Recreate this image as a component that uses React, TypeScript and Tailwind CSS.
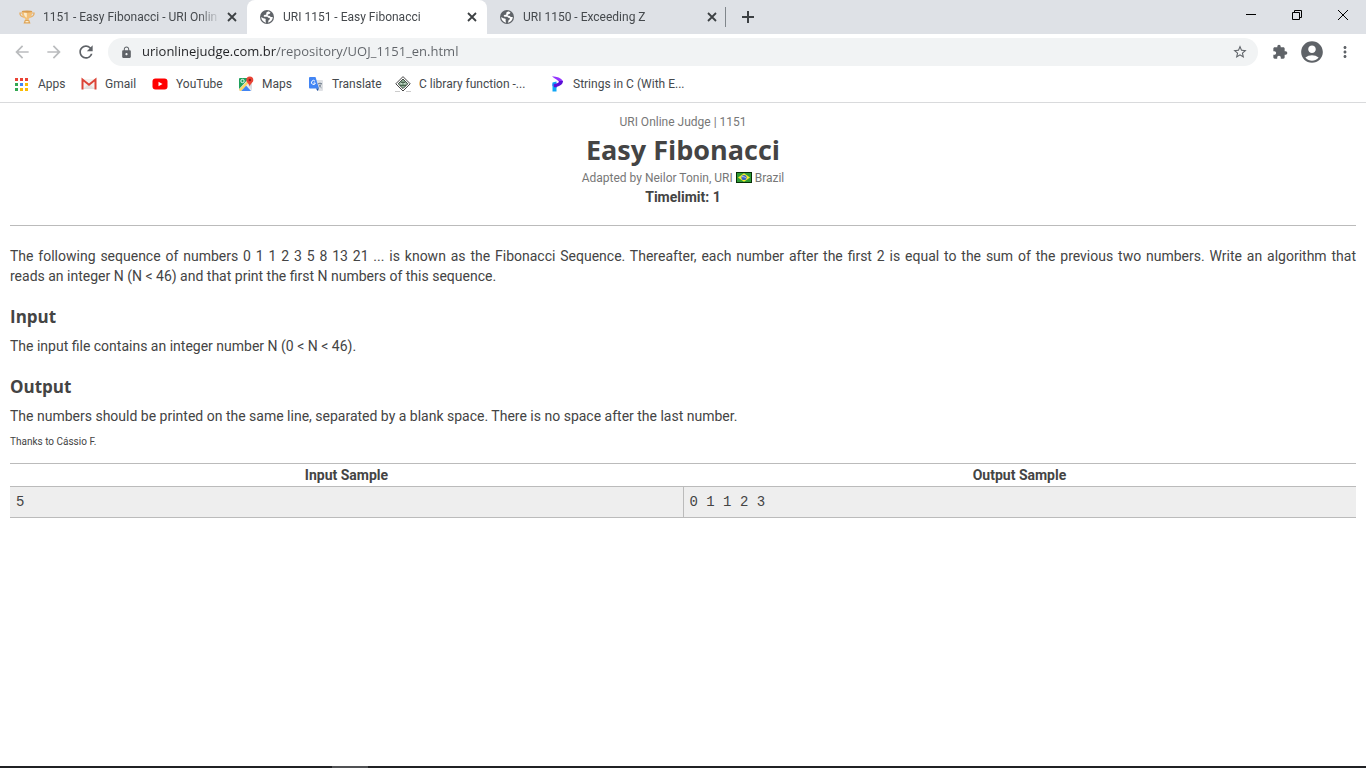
import type { ReactNode } from "react";
import {
  MdAccountCircle,
  MdArrowBack,
  MdArrowForward,
  MdExtension,
  MdLock,
  MdMoreVert,
  MdRefresh,
  MdStarBorder,
} from "react-icons/md";

function TrophyIcon() {
  return (
    <svg width="16" height="16" viewBox="0 0 16 16" aria-hidden="true">
      <path d="M4 4H.9c-.2 2.300 1.600 4 4.600 4.200M12 4h3.100c.2 2.300-1.600 4-4.600 4.200" fill="none" stroke="#e5ac62" strokeWidth="1.200" />
      <path d="M2.800 2.500h10.400c0 3.800-1 5.800-3.400 7.300v1.700H6.200V9.800C3.800 8.300 2.800 6.300 2.800 2.500z" fill="#f2bf78" />
      <path d="M4.800 3.500h3v5.300C5.800 8 4.800 6 4.800 3.500z" fill="#fdeccb" />
      <ellipse cx="8" cy="2.600" rx="5.200" ry="1.100" fill="#d99c4e" />
      <path d="M5.800 11h4.400l1.300 3.500h-7z" fill="#dfa557" />
      <path d="M6.500 12h3v1.300h-3z" fill="#fdeccb" />
    </svg>
  );
}

function GlobeIcon() {
  return (
    <svg width="16" height="16" viewBox="0 0 16 16" aria-hidden="true">
      <circle cx="8" cy="8" r="7" fill="#5f6368" />
      <path
        d="M9 2.200c-.2.900-1.300.8-1.700 1.500-.3.700.5 1.200-.2 1.900-.6.600-1.700.1-2.300.8-.4.600.1 1.300.9 1.300h2.200c.8 0 1 .7 1.500 1.100.6.400 1.500.2 1.500 1 0 .9-1 1-1.400 1.700-.4.700.1 1.500-.8 2.300A5.800 5.800 0 0013.800 8h-1.500c-.8 0-.9-.9-1.600-1.100-.8-.2-1.500.2-1.900-.4-.4-.7.500-1.200 1.300-1.400.7-.2 1.300-.6 1.300-1.500A5.700 5.700 0 009 2.200zM2.200 8.300c.1 2.800 2.200 5 4.700 5.400.3-.9-.4-1.300-.3-2 .1-.8.400-1.300-.2-1.900-.5-.5-1.200-.2-1.900-.5-.7-.3-1.500-1-2.300-1z"
        fill="#fff"
      />
    </svg>
  );
}

function CloseIcon() {
  return (
    <svg width="10" height="10" viewBox="0 0 10 10" aria-hidden="true">
      <path d="M1 1l8 8M9 1L1 9" stroke="#3c4043" strokeWidth="1.800" />
    </svg>
  );
}

function AppsIcon() {
  const colors = ["#ea4335", "#ea4335", "#ea4335", "#34a853", "#4285f4", "#fbbc04", "#34a853", "#fbbc04", "#fbbc04"];
  return (
    <svg width="14" height="13" viewBox="0 0 14 13" aria-hidden="true">
      {colors.map((c, i) => (
        <rect key={i} x={(i % 3) * 5} y={Math.floor(i / 3) * 5} width="3" height="3" fill={c} />
      ))}
    </svg>
  );
}

function GmailIcon() {
  return (
    <svg width="16" height="16" viewBox="0 0 16 16" aria-hidden="true">
      <path d="M1 3h14v10H1z" fill="#f5f1ef" />
      <path d="M2 13l6-5.500L14 13z" fill="#e4e1df" />
      <path d="M1.500 13.500V3.500L8 8.800l6.500-5.300v10" fill="none" stroke="#dc4437" strokeWidth="2" />
    </svg>
  );
}

function YouTubeIcon() {
  return (
    <svg width="16" height="16" viewBox="0 0 16 16" aria-hidden="true">
      <rect x="0.500" y="2.500" width="15" height="11" rx="3" fill="#f00" />
      <path d="M6.500 5.700v4.600l4-2.300z" fill="#fff" />
    </svg>
  );
}

function MapsIcon() {
  return (
    <svg width="16" height="16" viewBox="0 0 16 16" aria-hidden="true">
      <rect x="1" y="2" width="13" height="13" rx="1" fill="#e8eaed" />
      <path d="M1 3a1 1 0 011-1h9L1 13z" fill="#1fa15d" />
      <path d="M3 15l5-5.500 5 5.500z" fill="#4285f4" />
      <path d="M1 13.500L11.500 3l1.500 1.500L3 15H2z" fill="#fdd663" />
      <path d="M9.500 8l4.500 6V6z" fill="#dadce0" />
      <circle cx="4.500" cy="5" r="1.700" fill="none" stroke="#fff" strokeWidth="0.900" />
      <path d="M11.800 0.500a3.500 3.500 0 013.500 3.500c0 2.600-2.800 3.300-3.500 6.500-.7-3.200-3.500-3.900-3.500-6.500a3.500 3.500 0 013.500-3.500z" fill="#ea4335" />
      <circle cx="11.800" cy="4" r="1.200" fill="#8c1d18" />
    </svg>
  );
}

function TranslateIcon() {
  return (
    <svg width="16" height="16" viewBox="0 0 16 16" aria-hidden="true">
      <path d="M6 4h8a1 1 0 011 1v9a1 1 0 01-1 1H9.500z" fill="#dfe1e5" />
      <path d="M2 1h5.500L11 12.500H2a1 1 0 01-1-1V2a1 1 0 011-1z" fill="#4285f4" />
      <path d="M8 12.500h3L9.500 15z" fill="#174ea6" />
      <path d="M7 5.200A2 2 0 107.400 7H5.500" fill="none" stroke="#fff" strokeWidth="1" />
      <path d="M10 7.500h4M12 6.500v1M13.300 7.500c-.4 2-1.500 3-2.500 4M10.800 8.500c.6 1.500 1.700 2.500 2.700 3.300" fill="none" stroke="#7b8793" strokeWidth="0.900" />
    </svg>
  );
}

function LibraryIcon() {
  return (
    <svg width="16" height="16" viewBox="0 0 16 16" aria-hidden="true">
      <path d="M8 .6l7.200 7.200L8 15 .8 7.800z" fill="#fff" stroke="#444" strokeWidth="1" />
      <path d="M8 3l4.800 4.800L8 12.600 3.200 7.800z" fill="#8fb096" stroke="#414b43" strokeWidth="1" />
      <path d="M6 6.300h4M5 9.300h6" stroke="#38513e" strokeWidth="1" />
      <path d="M5.500 7.800h1.500M9 7.800h1.500" stroke="#e3efe5" strokeWidth="1" />
      <path d="M0 15.500h5M11 15.500h5" stroke="#ccc" />
    </svg>
  );
}

function StringsIcon() {
  return (
    <svg width="16" height="16" viewBox="0 0 16 16" aria-hidden="true">
      <path d="M3.500 6.500l4-1V15.500h-4z" fill="#0ea5f5" />
      <path d="M3.500 7.500h4v4.500l-4-2z" fill="#2573f5" />
      <path d="M3 .3c5 .2 9 1.700 11 4.700l-3.500 1.500C9 3.800 5.500 2.800 3 .3z" fill="#9333ff" />
      <path d="M14 5c0 3-3 5.700-9 6.300V8.200C8 7.700 10 6.700 10.300 5z" fill="#5b0fd6" />
    </svg>
  );
}

function BrazilFlag() {
  return (
    <svg className="inline-block align-[-1px]" width="16" height="11" viewBox="0 0 16 11" role="img" aria-label="Flag of Brazil">
      <rect width="16" height="11" fill="#062e06" />
      <rect x="1" y="1" width="14" height="9" fill="#2f9a35" />
      <path d="M8 1.200l6 4.300-6 4.300-6-4.300z" fill="#f5ec32" />
      <circle cx="8" cy="5.500" r="2.600" fill="#3a62c4" />
      <path d="M5.800 4.700c1.700-.3 3.400.3 4.500 1.600" fill="none" stroke="#dbe7ff" strokeWidth="0.800" />
    </svg>
  );
}

interface TabProps {
  title: string;
  icon: ReactNode;
  active?: boolean;
}

function Tab({ title, icon, active = false }: TabProps) {
  return (
    <div className={`flex h-full w-60 items-center pl-3 pr-[7px] ${active ? "rounded-t-lg bg-white" : ""}`}>
      <button type="button" role="tab" aria-selected={active} className="flex min-w-0 flex-1 items-center gap-2 text-left">
        <span className="shrink-0">{icon}</span>
        <span className="min-w-0 flex-1 overflow-hidden whitespace-nowrap [mask-image:linear-gradient(to_right,#000_88%,transparent)]">
          {title}
        </span>
      </button>
      <button type="button" aria-label={`Close ${title}`} className="ml-1 flex size-4 shrink-0 items-center justify-center">
        <CloseIcon />
      </button>
    </div>
  );
}

function TabStrip() {
  return (
    <header className="flex h-[34px] bg-[#dee1e6] text-xs text-[#45494d]">
      <div role="tablist" className="flex pl-[7px]">
        <Tab title="1151 - Easy Fibonacci - URI Onlin" icon={<TrophyIcon />} />
        <Tab title="URI 1151 - Easy Fibonacci" icon={<GlobeIcon />} active />
        <Tab title="URI 1150 - Exceeding Z" icon={<GlobeIcon />} />
      </div>
      <div className="my-[7px] -ml-0.5 w-px bg-[#80868b]" />
      <button type="button" aria-label="New tab" className="ml-3 flex w-5 items-center justify-center">
        <svg width="12" height="12" viewBox="0 0 12 12" aria-hidden="true">
          <path d="M6 0v12M0 6h12" stroke="#3c4043" strokeWidth="2" />
        </svg>
      </button>
      <div className="ml-auto flex h-[29px] text-black">
        <button type="button" aria-label="Minimize" className="flex w-[46px] items-center justify-center">
          <svg width="10" height="10" viewBox="0 0 10 10" aria-hidden="true">
            <path d="M0 4.500h10" stroke="currentColor" />
          </svg>
        </button>
        <button type="button" aria-label="Restore" className="flex w-[46px] items-center justify-center">
          <svg width="10" height="10" viewBox="0 0 10 10" fill="none" stroke="currentColor" aria-hidden="true">
            <path d="M.5 2.500h7v7h-7zM2.500 2.500v-2h7v7h-2" />
          </svg>
        </button>
        <button type="button" aria-label="Close window" className="flex w-[46px] items-center justify-center">
          <svg width="10" height="10" viewBox="0 0 10 10" aria-hidden="true">
            <path d="M0 0l10 10M10 0L0 10" stroke="currentColor" />
          </svg>
        </button>
      </div>
    </header>
  );
}

function Toolbar() {
  return (
    <div className="flex h-9 items-center pl-3 pr-3 text-[#5f6368]">
      <button type="button" aria-label="Back" className="text-[#babcbe]">
        <MdArrowBack size={20} />
      </button>
      <button type="button" aria-label="Forward" className="ml-3 text-[#babcbe]">
        <MdArrowForward size={20} />
      </button>
      <button type="button" aria-label="Reload" className="ml-3">
        <MdRefresh size={20} />
      </button>
      <div className="ml-3 flex h-7 flex-1 items-center rounded-full bg-[#f1f3f4] pl-3 pr-2.5">
        <MdLock size={13} />
        <input
          type="text"
          aria-label="Address"
          defaultValue="urionlinejudge.com.br/repository/UOJ_1151_en.html"
          spellCheck={false}
          className="ml-[9px] min-w-0 flex-1 bg-[linear-gradient(to_right,#202124_134px,#5f6368_134px)] bg-clip-text font-['Open_Sans',sans-serif] text-[13px] text-transparent outline-none"
        />
        <button type="button" aria-label="Bookmark this page">
          <MdStarBorder size={16} />
        </button>
      </div>
      <button type="button" aria-label="Extensions" className="ml-3.5">
        <MdExtension size={16} />
      </button>
      <button type="button" aria-label="Profile" className="ml-[11px]">
        <MdAccountCircle size={26} />
      </button>
      <button type="button" aria-label="Menu" className="ml-[11px]">
        <MdMoreVert size={18} />
      </button>
    </div>
  );
}

const bookmarks = [
  { label: "Apps", icon: <AppsIcon />, width: "w-[67px]" },
  { label: "Gmail", icon: <GmailIcon />, width: "w-[71px]" },
  { label: "YouTube", icon: <YouTubeIcon />, width: "w-[86px]" },
  { label: "Maps", icon: <MapsIcon />, width: "w-[70px]" },
  { label: "Translate", icon: <TranslateIcon />, width: "w-[87px]" },
  { label: "C library function -...", icon: <LibraryIcon />, width: "w-[154px]" },
  { label: "Strings in C (With E...", icon: <StringsIcon />, width: "w-[150px]" },
];

function BookmarksBar() {
  return (
    <nav aria-label="Bookmarks" className="flex h-[33px] items-center border-b border-[#d9dadc] pb-1 pl-3.5 text-xs text-[#45494d]">
      {bookmarks.map((b) => (
        <a key={b.label} href="#" className={`flex shrink-0 items-center gap-2 whitespace-nowrap ${b.width}`}>
          <span className="flex w-4 shrink-0 justify-center">{b.icon}</span>
          {b.label}
        </a>
      ))}
    </nav>
  );
}

function SectionHeading({ children }: { children: ReactNode }) {
  return <h2 className="mt-5 font-['Open_Sans',sans-serif] text-[17px] font-bold leading-[22px]">{children}</h2>;
}

function Problem() {
  return (
    <main className="flex-1 px-2.5 pt-2.5 font-[Roboto,sans-serif] text-sm leading-5 text-[#444]">
      <div className="border-b border-[#bbb] pb-[18px] text-center">
        <p className="text-xs leading-[18px] text-[#777]">URI Online Judge | 1151</p>
        <h1 className="font-['Open_Sans',sans-serif] text-[27px] font-bold leading-[38px]">Easy Fibonacci</h1>
        <p className="text-xs leading-[18px] text-[#777]">
          Adapted by Neilor Tonin, URI <BrazilFlag /> Brazil
        </p>
        <p className="font-bold">Timelimit: 1</p>
      </div>
      <p className="mt-5 text-justify">
        The following sequence of numbers 0 1 1 2 3 5 8 13 21 ... is known as the Fibonacci Sequence. Thereafter, each
        number after the first 2 is equal to the sum of the previous two numbers. Write an algorithm that{" "}
        <span className="whitespace-nowrap">reads an integer N (N &lt; 46)</span> and that print the first N numbers of
        this sequence.
      </p>
      <SectionHeading>Input</SectionHeading>
      <p className="mt-2">The input file contains an integer number N (0 &lt; N &lt; 46).</p>
      <SectionHeading>Output</SectionHeading>
      <p className="mt-2">
        The numbers should be printed on the same line, separated by a blank space. There is no space after the last
        number.
      </p>
      <p className="mt-1.5 text-[10px] leading-5">Thanks to Cássio F.</p>
      <table className="mt-[11px] w-full table-fixed border-collapse border-y border-[#bbb]">
        <thead>
          <tr>
            <th className="py-px text-center font-bold">Input Sample</th>
            <th className="py-px text-center font-bold">Output Sample</th>
          </tr>
        </thead>
        <tbody className="border-t border-[#bbb] bg-[#eee] font-['Liberation_Mono',monospace]">
          <tr>
            <td className="border-r border-[#bbb] px-1.5 py-[5px]">5</td>
            <td className="px-1.5 py-[5px]">0 1 1 2 3</td>
          </tr>
        </tbody>
      </table>
    </main>
  );
}

export default function App() {
  return (
    <div className="flex min-h-screen flex-col bg-white">
      <div className="font-[Roboto,sans-serif]">
        <TabStrip />
        <Toolbar />
        <BookmarksBar />
      </div>
      <Problem />
      <footer className="flex h-0.5 bg-[#202124]">
        <div className="ml-[332px] w-9 bg-[#505154]" />
      </footer>
    </div>
  );
}
